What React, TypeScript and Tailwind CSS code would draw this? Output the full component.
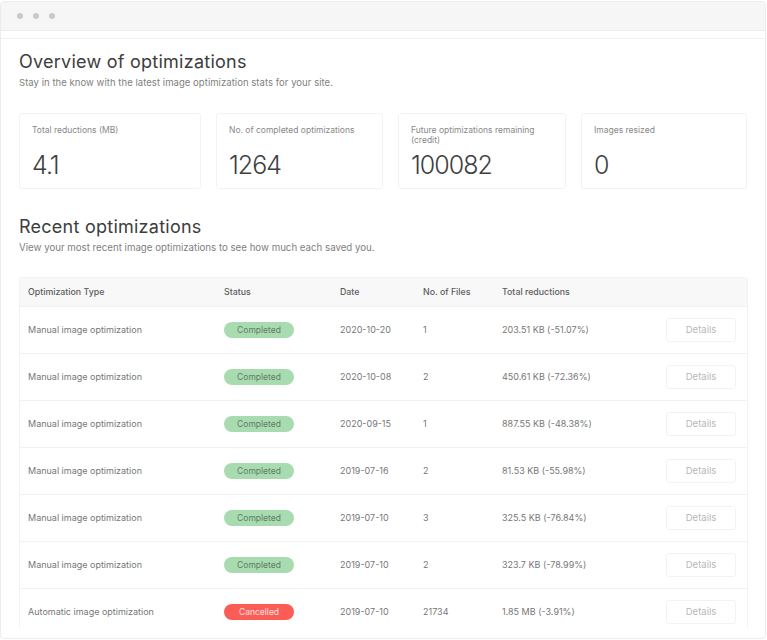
const stats = [
  { label: 'Total reductions (MB)', value: '4.1', width: 'w-[182px]' },
  { label: 'No. of completed optimizations', value: '1264', width: 'w-[167px]' },
  { label: 'Future optimizations remaining (credit)', value: '100082', width: 'w-[168px]' },
  { label: 'Images resized', value: '0', width: 'w-[166px]' },
];

const rows = [
  { type: 'Manual image optimization', status: 'Completed', date: '2020-10-20', files: '1', total: '203.51 KB (-51.07%)' },
  { type: 'Manual image optimization', status: 'Completed', date: '2020-10-08', files: '2', total: '450.61 KB (-72.36%)' },
  { type: 'Manual image optimization', status: 'Completed', date: '2020-09-15', files: '1', total: '887.55 KB (-48.38%)' },
  { type: 'Manual image optimization', status: 'Completed', date: '2019-07-16', files: '2', total: '81.53 KB (-55.98%)' },
  { type: 'Manual image optimization', status: 'Completed', date: '2019-07-10', files: '3', total: '325.5 KB (-76.84%)' },
  { type: 'Manual image optimization', status: 'Completed', date: '2019-07-10', files: '2', total: '323.7 KB (-78.99%)' },
  { type: 'Automatic image optimization', status: 'Cancelled', date: '2019-07-10', files: '21734', total: '1.85 MB (-3.91%)' },
];

const gridCols = 'grid grid-cols-[196px_116px_83px_79px_164px_70px] items-center pl-[8px]';

const App = () => {
  return (
    <div className="h-[640px] overflow-hidden bg-white pt-px font-['Inter',sans-serif]">
      <div className="flex h-[638px] w-[766px] flex-col overflow-hidden rounded-[4px] border border-[#ececec]">
        <header className="flex h-[29px] shrink-0 items-center gap-[10px] border-b border-[#ececec] bg-[#f6f6f6] pl-[16px]">
          <span className="h-[6px] w-[6px] rounded-full bg-[#c9c9c9]" />
          <span className="h-[6px] w-[6px] rounded-full bg-[#c9c9c9]" />
          <span className="h-[6px] w-[6px] rounded-full bg-[#c9c9c9]" />
        </header>
        <div className="mt-[7px] flex-1 overflow-hidden border-t border-[#f1f1f1] pl-[18px]">
          <section>
            <h2 className="mt-[11px] text-[18px] leading-[24px] tracking-[0.25px] text-[#3d3d3d]">
              Overview of optimizations
            </h2>
            <p className="mt-[2px] text-[9.5px] leading-[14px] tracking-[0.05px] text-[#808080]">
              Stay in the know with the latest image optimization stats for your site.
            </p>
            <div className="mt-[23px] flex gap-[15px]">
              {stats.map((s) => (
                <div
                  key={s.label}
                  className={`${s.width} flex h-[76px] flex-col rounded-[3px] border border-[#f3f3f3] px-[12px] pt-[11px]`}
                >
                  <div className="h-[24px] text-[8.5px] leading-[10px] text-[#888888]">{s.label}</div>
                  <div className="text-[25px] leading-[32px] font-light tracking-[-1px] text-[#3f3f3f]">{s.value}</div>
                </div>
              ))}
            </div>
          </section>
          <section>
            <h2 className="mt-[26px] text-[18px] leading-[24px] tracking-[0.25px] text-[#3d3d3d]">
              Recent optimizations
            </h2>
            <p className="mt-[2px] text-[9.7px] leading-[14px] text-[#808080]">
              View your most recent image optimizations to see how much each saved you.
            </p>
            <div className="mt-[22px] h-[351px] w-[729px] overflow-hidden rounded-t-[3px] border-x border-t border-[#f3f3f3]">
              <div className={`${gridCols} h-[28px] bg-[#f8f8f8] text-[8.8px] font-medium text-[#5c5c5c]`}>
                <span>Optimization Type</span>
                <span>Status</span>
                <span>Date</span>
                <span>No. of Files</span>
                <span>Total reductions</span>
              </div>
              {rows.map((r, i) => (
                <div key={i} className={`${gridCols} h-[47px] border-t border-[#f2f2f2] text-[9px] text-[#777777]`}>
                  <span>{r.type}</span>
                  <span>
                    <span
                      className={`flex h-[16px] w-[70px] items-center justify-center rounded-full text-[8.5px] ${
                        r.status === 'Completed' ? 'bg-[#a8dbb0] text-[#5f7d64]' : 'bg-[#fb5c55] text-[#ffe3e1]'
                      }`}
                    >
                      {r.status}
                    </span>
                  </span>
                  <span>{r.date}</span>
                  <span>{r.files}</span>
                  <span>{r.total}</span>
                  <button className="h-[24px] w-[70px] rounded-[3px] border border-[#f3f3f3] text-[9.5px] text-[#b8b8b8]">
                    Details
                  </button>
                </div>
              ))}
            </div>
          </section>
        </div>
      </div>
    </div>
  );
};

export default App;
